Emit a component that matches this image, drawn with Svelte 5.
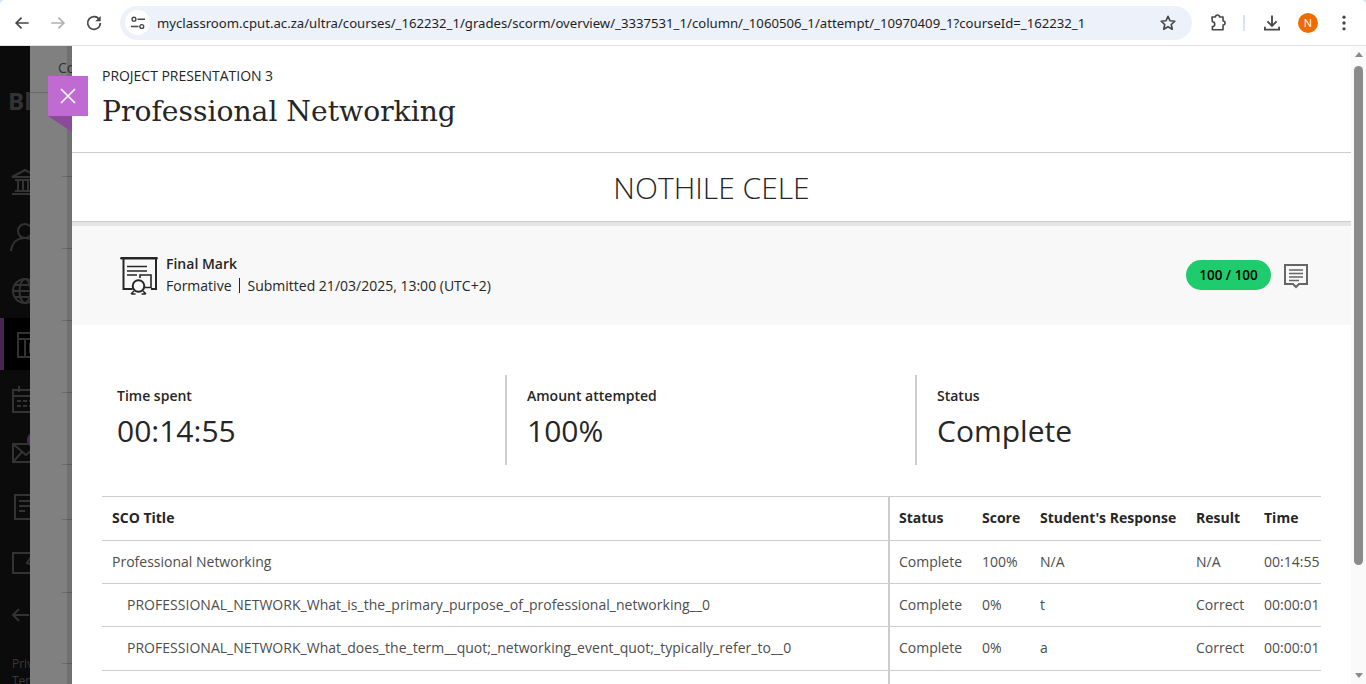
<script>
  const stats = [
    { label: 'Time spent', value: '00:14:55' },
    { label: 'Amount attempted', value: '100%' },
    { label: 'Status', value: 'Complete' }
  ];

  const columns = ['Status', 'Score', "Student's Response", 'Result', 'Time'];

  const rows = [
    { title: 'Professional Networking', top: true, score: '100%', response: 'N/A', result: 'N/A', time: '00:14:55' },
    { title: 'PROFESSIONAL_NETWORK_What_is_the_primary_purpose_of_professional_networking__0', score: '0%', response: 't', result: 'Correct', time: '00:00:01' },
    { title: 'PROFESSIONAL_NETWORK_What_does_the_term__quot;_networking_event_quot;_typically_refer_to__0', tall: true, score: '0%', response: 'a', result: 'Correct', time: '00:00:01' },
    { title: '', score: '', response: '', result: '', time: '' }
  ];

  const ticks = [92, 176, 248, 320, 392, 464, 519, 592, 663];
</script>

<div class="window">
  <header class="toolbar">
    <button class="tool" aria-label="Back">
      <svg viewBox="0 0 24 24" width="20" height="20"><path d="M20 12H5M11.5 5.5 5 12l6.500 6.500" fill="none" stroke="#474747" stroke-width="2"/></svg>
    </button>
    <button class="tool" aria-label="Forward">
      <svg viewBox="0 0 24 24" width="20" height="20"><path d="M4 12h15M12.500 5.500 19 12l-6.500 6.500" fill="none" stroke="#b0b0b0" stroke-width="2"/></svg>
    </button>
    <button class="tool" aria-label="Reload">
      <svg viewBox="0 0 24 24" width="20" height="20"><path d="M18.600 8.200A7.600 7.600 0 1 0 19.600 12" fill="none" stroke="#474747" stroke-width="2"/><path d="M20 3.500V10h-6.500z" fill="#474747"/></svg>
    </button>
    <div class="omnibox">
      <span class="site-chip">
        <svg viewBox="0 0 16 16" width="16" height="16" fill="none" stroke="#474747" stroke-width="1.400"><circle cx="4" cy="4.200" r="1.900"/><path d="M7.500 4.200H15M1 11.500h7.500"/><circle cx="11.800" cy="11.500" r="1.900"/></svg>
      </span>
      <span class="url">myclassroom.cput.ac.za/ultra/courses/_162232_1/grades/scorm/overview/_3337531_1/column/_1060506_1/attempt/_10970409_1?courseId=_162232_1</span>
      <svg class="star" viewBox="0 0 24 24" width="20" height="20"><path d="m12 4 2.400 5.300 5.800.6-4.300 3.900 1.200 5.700-5.100-2.900-5.100 2.900 1.200-5.700-4.300-3.900 5.800-.6z" fill="none" stroke="#474747" stroke-width="2" stroke-linejoin="round"/></svg>
    </div>
    <button class="tool ext" aria-label="Extensions">
      <svg viewBox="0 0 24 24" width="20" height="20"><path d="M5 4h4.500a2.500 2.500 0 0 1 5 0H19v5a2.500 2.500 0 0 1 0 5v6H5.500v-4a2.500 2.500 0 0 0 0-6z" transform="translate(0 1) scale(.95)" fill="none" stroke="#474747" stroke-width="2" stroke-linejoin="round"/></svg>
    </button>
    <span class="sep"></span>
    <button class="tool dl" aria-label="Downloads">
      <svg viewBox="0 0 24 24" width="20" height="20"><path d="M12 3v12M6.500 10 12 15.500 17.500 10M3.500 16.500V20h17v-3.500" fill="none" stroke="#474747" stroke-width="2.200"/></svg>
    </button>
    <span class="avatar">N</span>
    <button class="tool more" aria-label="Menu">
      <svg viewBox="0 0 24 24" width="20" height="20" fill="#474747"><circle cx="12" cy="5" r="2"/><circle cx="12" cy="12" r="2"/><circle cx="12" cy="19" r="2"/></svg>
    </button>
  </header>

  <div class="stage">
    <nav class="sidebar">
      <span class="logo">Bl</span>
      <div class="nav-icons">
        <svg viewBox="0 0 36 36" width="36" height="36"><path d="M5 12 18 5l13 7zM8 15h20M8 26h20M5 29h26M11 15v11M16 15v11M21 15v11M26 15v11" fill="none" stroke="#333" stroke-width="2"/></svg>
        <svg viewBox="0 0 36 36" width="36" height="36"><circle cx="18" cy="12" r="7" fill="none" stroke="#333" stroke-width="2"/><path d="M4 32c1-9 7-13 14-13s13 4 14 13" fill="none" stroke="#333" stroke-width="2"/></svg>
        <svg viewBox="0 0 36 36" width="36" height="36" fill="none" stroke="#333" stroke-width="2"><circle cx="18" cy="18" r="12"/><ellipse cx="18" cy="18" rx="5.500" ry="12"/><path d="M6 18h24M8 12h20M8 24h20"/></svg>
        <div class="active-item">
          <svg viewBox="0 0 36 36" width="36" height="36" fill="none" stroke="#333" stroke-width="2"><rect x="6" y="6" width="24" height="24"/><path d="M6 12h24M13 12v18M18 17h12v8H18z"/></svg>
        </div>
        <svg viewBox="0 0 36 36" width="36" height="36" fill="none" stroke="#333" stroke-width="2"><rect x="6" y="9" width="24" height="22"/><path d="M6 15h24M12 5v6M24 5v6M10 20h4M16 20h4M22 20h4M10 25h4M16 25h4M22 25h4"/></svg>
        <div class="mail">
          <svg viewBox="0 0 36 36" width="36" height="36" fill="none" stroke="#333" stroke-width="2"><rect x="6" y="9" width="26" height="18"/><path d="m6 9 13 11L32 9M6 27l9-10"/></svg>
          <span class="dot"></span>
        </div>
        <svg viewBox="0 0 36 36" width="36" height="36" fill="none" stroke="#333" stroke-width="2"><path d="M8 6h22v24H8zM12 12h14M12 17h14M12 22h6"/></svg>
        <svg viewBox="0 0 36 36" width="36" height="36" fill="none" stroke="#333" stroke-width="2"><path d="M30 10H6v20h24V20M20 20l8-12 3 2-8 11z"/></svg>
        <svg viewBox="0 0 36 36" width="36" height="36" fill="none" stroke="#333" stroke-width="2"><path d="M24 28a12 12 0 1 0 0-20M6 18h16M12 12l-6 6 6 6"/></svg>
      </div>
      <div class="legal"><span>Privacy</span><span>Terms</span></div>
    </nav>

    <div class="backdrop">
      <span class="crumb">Co</span>
      {#each ticks as y}
        <i class="tick" style="top: {y - 46}px"></i>
      {/each}
      <span class="shade"></span>
    </div>

    <main class="panel">
      <button class="close" aria-label="Close">
        <svg viewBox="0 0 16 16" width="16" height="16"><path d="m1 1 14 14M15 1 1 15" stroke="#fff" stroke-width="1.600"/></svg>
      </button>
      <i class="fold"></i>

      <div class="panel-head">
        <div class="eyebrow">PROJECT PRESENTATION 3</div>
        <h1>Professional Networking</h1>
      </div>

      <div class="student">NOTHILE CELE</div>

      <section class="summary">
        <svg class="cert" viewBox="0 0 38 38" width="38" height="38" fill="none" stroke="#262626" stroke-width="2">
          <path d="M1.500 1.200h35" stroke-width="2.600" stroke-linecap="round"/>
          <path d="M3.500 2v30h9M36 2v30h-5"/>
          <path d="M7 9.500h20M7 14h20M7 18h10" stroke-width="1.600"/>
          <path d="M20 21v-3h11v12.500h-6" stroke-width="1.600"/>
          <circle cx="18.500" cy="29" r="5.800"/>
          <path d="m14 34-3 3M23 34l3 3M11.500 37h4M25.500 37h-4" stroke-width="1.500"/>
        </svg>
        <div class="summary-text">
          <strong>Final Mark</strong>
          <div class="meta"><span class="kind">Formative</span><span>Submitted 21/03/2025, 13:00 (UTC+2)</span></div>
        </div>
        <span class="pill">100 / 100</span>
        <svg class="feedback" viewBox="0 0 24 25" width="24" height="25" fill="none" stroke="#666">
          <path d="M1 1h22v19h-8l-3 3-3-3H1z" stroke-width="2"/>
          <path d="M5 6h14M5 9.500h14M5 13h14M5 16.500h10" stroke-width="1.400"/>
        </svg>
      </section>

      <section class="stats">
        {#each stats as stat}
          <div class="stat">
            <div class="stat-label">{stat.label}</div>
            <div class="stat-value">{stat.value}</div>
          </div>
        {/each}
      </section>

      <table>
        <colgroup>
          <col class="c-title" /><col class="c-status" /><col class="c-score" /><col class="c-resp" /><col class="c-result" /><col class="c-time" />
        </colgroup>
        <thead>
          <tr>
            <th class="sticky">SCO Title</th>
            {#each columns as c}<th>{c}</th>{/each}
          </tr>
        </thead>
        <tbody>
          {#each rows as row}
            <tr class:tall={row.tall}>
              <td class="sticky" class:indent={!row.top}>{row.title}</td>
              <td>{row.title ? 'Complete' : ''}</td>
              <td>{row.score}</td>
              <td>{row.response}</td>
              <td>{row.result}</td>
              <td>{row.time}</td>
            </tr>
          {/each}
        </tbody>
      </table>
    </main>

    <aside class="scrollbar">
      <i class="arrow up"></i>
      <div class="track"><div class="thumb"></div></div>
      <i class="arrow down"></i>
    </aside>
  </div>
</div>

<style>
  :global(body) {
    margin: 0;
    overflow: hidden;
  }

  .window {
    display: flex;
    flex-direction: column;
    width: 1366px;
    height: 684px;
    overflow: hidden;
    font-family: "Open Sans", sans-serif;
    color: #262626;
    background: #d8e4f8;
  }

  .toolbar {
    display: flex;
    align-items: center;
    flex: none;
    height: 45px;
    border-bottom: 1px solid #e2e2e2;
    border-radius: 5px 5px 0 0;
    background: #fff;
  }

  .tool {
    display: flex;
    align-items: center;
    justify-content: center;
    width: 36px;
    height: 36px;
    padding: 0;
    border: 0;
    background: none;
    flex: none;
  }

  .tool:first-child {
    margin-left: 4px;
  }

  .omnibox {
    display: flex;
    align-items: center;
    box-sizing: border-box;
    width: 1072px;
    height: 34px;
    margin-left: 8px;
    padding: 0 14px 0 5px;
    border-radius: 17px;
    background: #edf2fa;
    flex: none;
  }

  .site-chip {
    display: flex;
    align-items: center;
    justify-content: center;
    width: 25px;
    height: 25px;
    border-radius: 50%;
    background: #fff;
    flex: none;
  }

  .url {
    flex: 1;
    margin-left: 7px;
    font-family: "Noto Sans", sans-serif;
    font-size: 13.16px;
    color: #1f1f1f;
    white-space: nowrap;
  }

  .ext {
    margin-left: 8px;
  }

  .sep {
    width: 2px;
    height: 16px;
    margin: 0 8px 0 7px;
    background: #d3e3fd;
    flex: none;
  }

  .dl {
    margin-left: 1px;
  }

  .avatar {
    display: flex;
    align-items: center;
    justify-content: center;
    width: 20px;
    height: 20px;
    margin-left: 8px;
    border-radius: 50%;
    background: #ef6c00;
    color: #fff;
    font-size: 11px;
    flex: none;
  }

  .more {
    margin-left: 8px;
  }

  .stage {
    display: flex;
    flex: 1;
    min-height: 0;
  }

  .sidebar {
    position: relative;
    width: 30px;
    flex: none;
    overflow: hidden;
    background: #0b0b0b;
  }

  .logo {
    position: absolute;
    left: 8px;
    top: 38px;
    font-size: 24px;
    font-weight: 700;
    color: #333;
  }

  .nav-icons {
    display: flex;
    flex-direction: column;
    gap: 18px;
    padding: 119px 0 0 7px;
    width: 60px;
  }

  .nav-icons svg {
    display: block;
  }

  .active-item {
    position: relative;
  }

  .active-item::before {
    content: '';
    position: absolute;
    left: -7px;
    top: -9px;
    width: 30px;
    height: 52px;
    background: #000;
    border-left: 4px solid #46264f;
    box-sizing: border-box;
  }

  .active-item svg {
    position: relative;
    margin-left: 5px;
  }

  .mail {
    position: relative;
  }

  .dot {
    position: absolute;
    left: 20px;
    top: -3px;
    width: 16px;
    height: 16px;
    border-radius: 50%;
    background: #4a2a55;
  }

  .legal {
    position: absolute;
    left: 12px;
    top: 609px;
    display: flex;
    flex-direction: column;
    font-size: 12px;
    color: #3a3a3a;
    white-space: nowrap;
  }

  .backdrop {
    position: relative;
    width: 42px;
    flex: none;
    overflow: hidden;
    background: #808080;
  }

  .crumb {
    position: absolute;
    left: 28px;
    top: 12px;
    font-size: 14px;
    color: #333;
  }

  .tick {
    position: absolute;
    left: 32px;
    right: 0;
    height: 1px;
    background: #6a6a6a;
  }

  .tick:nth-of-type(1) {
    left: 0;
  }

  .shade {
    position: absolute;
    right: 0;
    top: 0;
    bottom: 0;
    width: 5px;
    background: rgba(0, 0, 0, 0.12);
  }

  .panel {
    position: relative;
    flex: 1;
    min-width: 0;
    background: #fff;
  }

  .close {
    position: absolute;
    left: -24px;
    top: 30px;
    display: flex;
    align-items: center;
    justify-content: center;
    width: 40px;
    height: 40px;
    padding: 0;
    border: 0;
    background: #c06bd1;
    z-index: 2;
  }

  .fold {
    position: absolute;
    left: -24px;
    top: 70px;
    width: 0;
    height: 0;
    border-top: 16px solid #8c4a9a;
    border-left: 24px solid transparent;
    z-index: 1;
  }

  .panel-head {
    box-sizing: border-box;
    height: 107px;
    padding: 20px 30px 0;
    border-bottom: 1px solid #cdcdcd;
  }

  .eyebrow {
    font-size: 14px;
    line-height: 19px;
    letter-spacing: -0.03px;
    color: #262626;
  }

  h1 {
    margin: 7px 0 0;
    font-family: "DejaVu Serif", serif;
    font-size: 28.2px;
    line-height: 40px;
    font-weight: 400;
    color: #262626;
  }

  .student {
    box-sizing: border-box;
    height: 69px;
    border-bottom: 1px solid #cdcdcd;
    text-align: center;
    font-size: 30px;
    font-weight: 300;
    line-height: 70px;
    color: #262626;
  }

  .summary {
    display: flex;
    align-items: center;
    box-sizing: border-box;
    height: 103px;
    padding: 0 43px 0 48px;
    border-top: 4px solid #e5e5e5;
    background: #f8f8f8;
  }

  .cert {
    flex: none;
  }

  .summary-text {
    flex: 1;
    margin-left: 8px;
    padding-bottom: 2px;
    font-size: 14px;
    line-height: 22px;
  }

  .summary-text strong {
    display: block;
    font-weight: 600;
  }

  .meta {
    display: flex;
    align-items: center;
  }

  .kind {
    margin-right: 8px;
    padding-right: 7px;
    border-right: 1px solid #262626;
    line-height: 15px;
  }

  .pill {
    box-sizing: border-box;
    width: 85px;
    height: 30px;
    margin-top: -2px;
    border-radius: 15px;
    background: #1ecb6d;
    color: #000;
    font-size: 13.5px;
    font-weight: 600;
    line-height: 30px;
    text-align: center;
  }

  .feedback {
    margin: 2px 0 0 13px;
    flex: none;
  }

  .stats {
    display: grid;
    grid-template-columns: 403px 410px 1fr;
    margin: 50px 30px 31px;
  }

  .stat {
    box-sizing: border-box;
    height: 90px;
    padding: 11px 0 0 20px;
    border-left: 2px solid #cdcdcd;
  }

  .stat:first-child {
    padding-left: 15px;
    border-left: 0;
  }

  .stat-label {
    font-size: 14px;
    line-height: 20px;
    font-weight: 600;
  }

  .stat-value {
    margin-top: 4px;
    font-size: 30px;
    line-height: 41px;
  }

  table {
    width: 1219px;
    margin-left: 30px;
    border-collapse: separate;
    border-spacing: 0;
    table-layout: fixed;
    border-top: 1px solid #cdcdcd;
    font-size: 14px;
    color: #4d4d4d;
  }

  .c-title { width: 788px; }
  .c-status { width: 83px; }
  .c-score { width: 58px; }
  .c-resp { width: 156px; }
  .c-result { width: 68px; }
  .c-time { width: 66px; }

  th {
    box-sizing: border-box;
    height: 44px;
    padding: 0 0 2px 9px;
    border-bottom: 1px solid #cdcdcd;
    text-align: left;
    font-weight: 700;
    color: #262626;
    white-space: nowrap;
  }

  td {
    box-sizing: border-box;
    height: 43px;
    padding: 0 0 2px 9px;
    border-bottom: 1px solid #cdcdcd;
    white-space: nowrap;
  }

  .tall td {
    height: 44px;
  }

  .sticky {
    padding-left: 10px;
    border-right: 2px solid #cdcdcd;
  }

  td.indent {
    padding-left: 25px;
    letter-spacing: 0.026px;
  }

  .scrollbar {
    display: flex;
    flex-direction: column;
    align-items: center;
    width: 15px;
    flex: none;
    background: #fafafa;
  }

  .track {
    flex: 1;
    width: 100%;
    padding-top: 2px;
  }

  .thumb {
    width: 9px;
    height: 499px;
    margin-left: 3px;
    border-radius: 5px;
    background: #8b8b8b;
  }

  .arrow {
    width: 0;
    height: 0;
    margin: 6px 0;
    border-left: 4px solid transparent;
    border-right: 4px solid transparent;
  }

  .arrow.up {
    border-bottom: 5px solid #8b8b8b;
    margin-bottom: 7px;
  }

  .arrow.down {
    border-top: 5px solid #8b8b8b;
    margin-top: 2px;
  }
</style>
